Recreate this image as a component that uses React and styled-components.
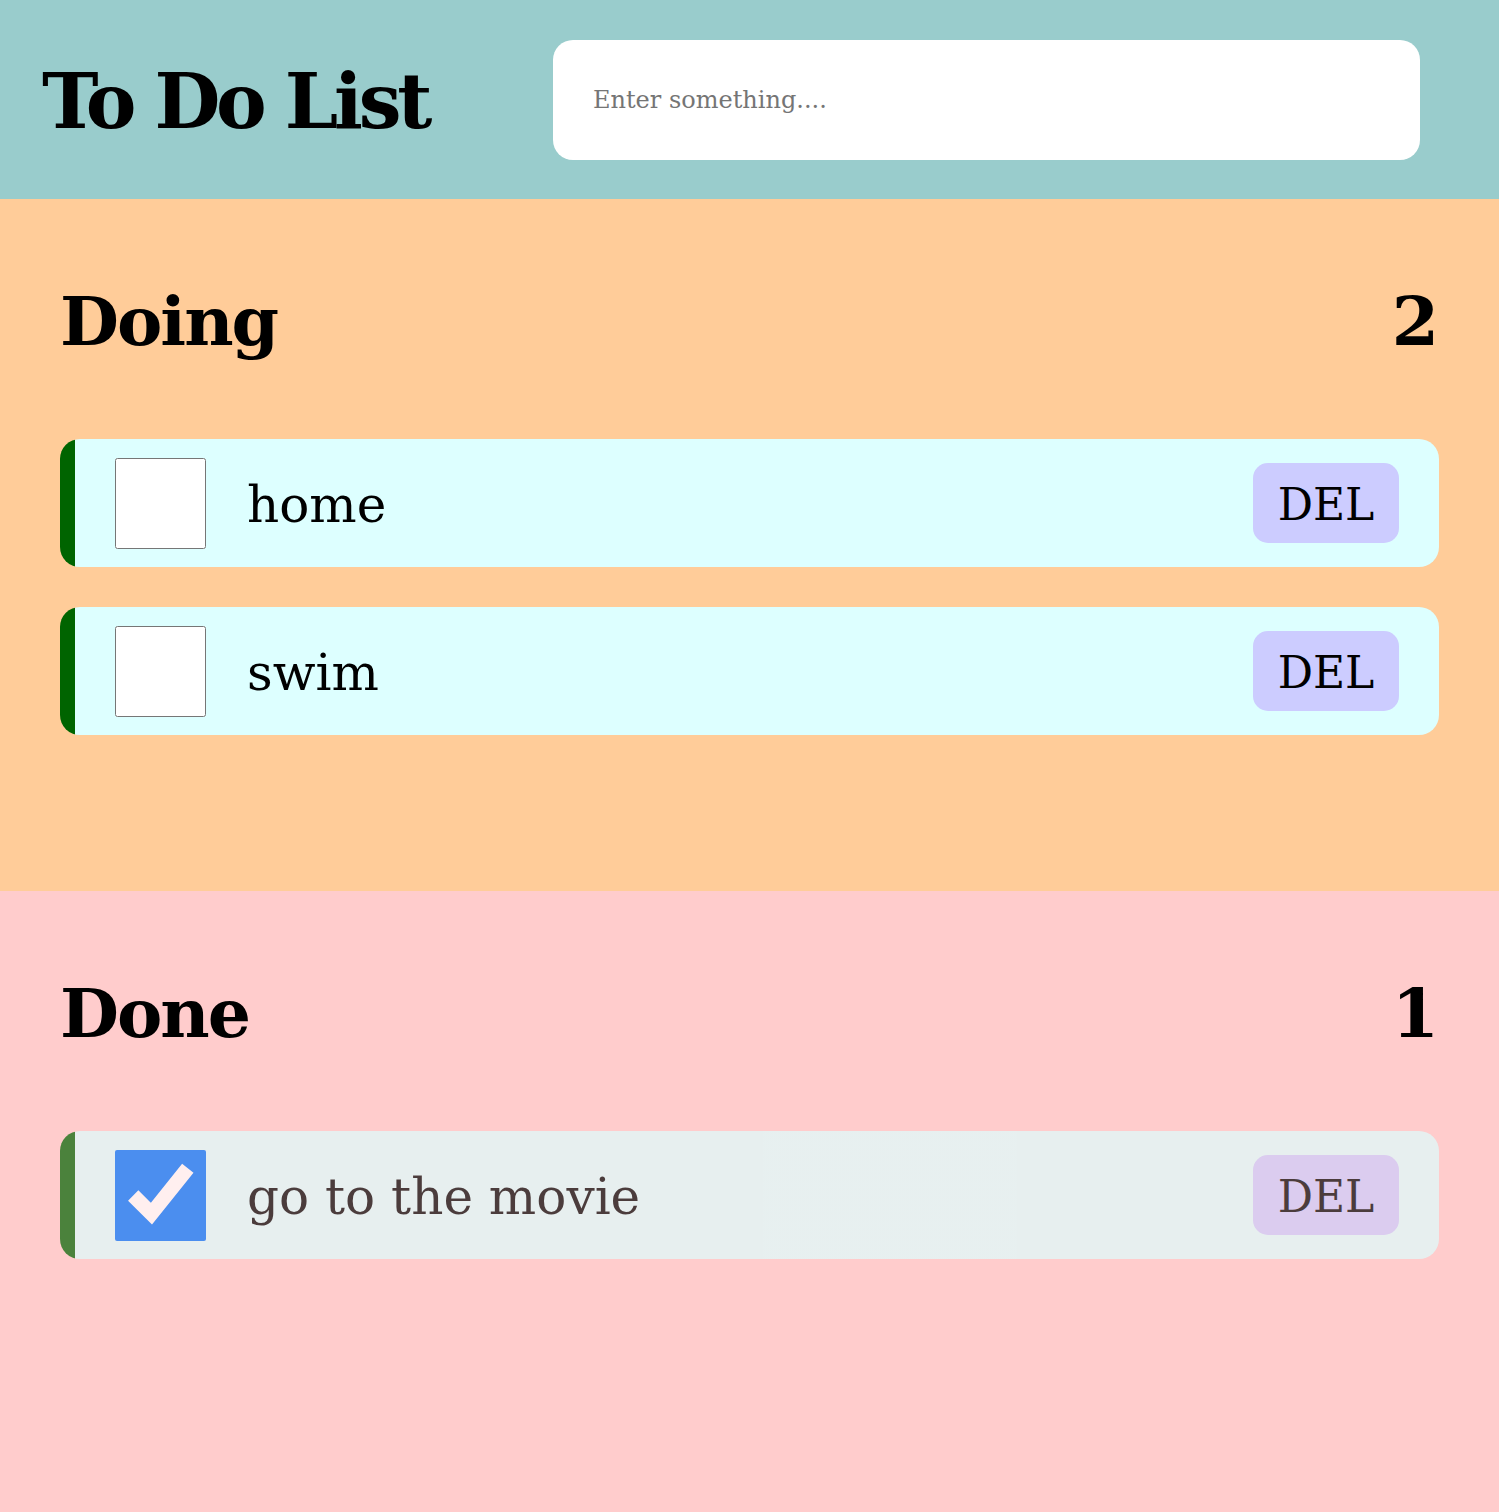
import React from "react";
import styled, { createGlobalStyle } from "styled-components";

const GlobalStyle = createGlobalStyle`
  html, body {
    margin: 0;
    padding: 0;
    background: #ffcccc;
  }
  * { box-sizing: border-box; }
`;

const FONT = `"DejaVu Serif", "Liberation Serif", serif`;

const Page = styled.div`
  min-height: 100vh;
  display: flex;
  flex-direction: column;
  font-family: ${FONT};
`;

const Header = styled.header`
  height: 199px;
  background: #99cccc;
  display: flex;
  align-items: center;
  padding: 0 79px 0 42px;
`;

const Title = styled.h1`
  margin: 0;
  padding-top: 4px;
  font-family: ${FONT};
  font-size: 76px;
  font-weight: 700;
  letter-spacing: -4.2px;
  line-height: 1;
  color: #000;
`;

const Input = styled.input`
  margin-left: auto;
  width: 867px;
  height: 120px;
  border: none;
  outline: none;
  border-radius: 20px;
  background: #fff;
  padding: 0 40px;
  font-family: ${FONT};
  font-size: 24px;
  color: #000;
  &::placeholder {
    color: #757575;
  }
`;

const Section = styled.section`
  background: ${(p) => p.$bg};
  padding: 88px 60px 156px;
  flex-grow: ${(p) => (p.$grow ? 1 : 0)};
`;

const SectionHead = styled.div`
  display: flex;
  justify-content: space-between;
  align-items: baseline;
  margin-bottom: 84px;
`;

const SectionTitle = styled.h2`
  margin: 0;
  font-family: ${FONT};
  font-size: 68px;
  font-weight: 700;
  line-height: 68px;
  letter-spacing: -2px;
  color: #000;
`;

const Count = styled.span`
  font-size: 68px;
  font-weight: 700;
  line-height: 68px;
  color: #000;
`;

const List = styled.ul`
  list-style: none;
  margin: 0;
  padding: 0;
  display: flex;
  flex-direction: column;
  gap: 40px;
`;

const Card = styled.li`
  display: flex;
  align-items: center;
  height: 128px;
  padding: 0 40px 0 55px;
  background: linear-gradient(to right, #006400 15px, #ddffff 15px);
  border-radius: 20px;
  opacity: ${(p) => (p.$done ? 0.7 : 1)};
`;

const Check = styled.input.attrs({ type: "checkbox" })`
  width: 91px;
  height: 91px;
  margin: 0;
  flex-shrink: 0;
`;

const ItemText = styled.span`
  margin-left: 41px;
  padding-top: 4px;
  font-family: ${FONT};
  font-size: 50px;
  color: #000;
`;

const DelButton = styled.button`
  margin-left: auto;
  width: 146px;
  height: 80px;
  border: none;
  border-radius: 15px;
  background: #ccccff;
  font-family: ${FONT};
  font-size: 44px;
  color: #000;
  padding: 2px 0 0;
  cursor: pointer;
`;

const doing = [
  { id: 1, text: "home" },
  { id: 2, text: "swim" },
];
const done = [{ id: 3, text: "go to the movie" }];

function Item({ text, isDone }) {
  return (
    <Card $done={isDone}>
      <Check defaultChecked={isDone} />
      <ItemText>{text}</ItemText>
      <DelButton>DEL</DelButton>
    </Card>
  );
}

export default function App() {
  return (
    <Page>
      <GlobalStyle />
      <Header>
        <Title>To Do List</Title>
        <Input placeholder="Enter something...." />
      </Header>
      <Section $bg="#ffcc99">
        <SectionHead>
          <SectionTitle>Doing</SectionTitle>
          <Count>{doing.length}</Count>
        </SectionHead>
        <List>
          {doing.map((t) => (
            <Item key={t.id} text={t.text} />
          ))}
        </List>
      </Section>
      <Section $bg="#ffcccc" $grow>
        <SectionHead>
          <SectionTitle>Done</SectionTitle>
          <Count>{done.length}</Count>
        </SectionHead>
        <List>
          {done.map((t) => (
            <Item key={t.id} text={t.text} isDone />
          ))}
        </List>
      </Section>
    </Page>
  );
}
